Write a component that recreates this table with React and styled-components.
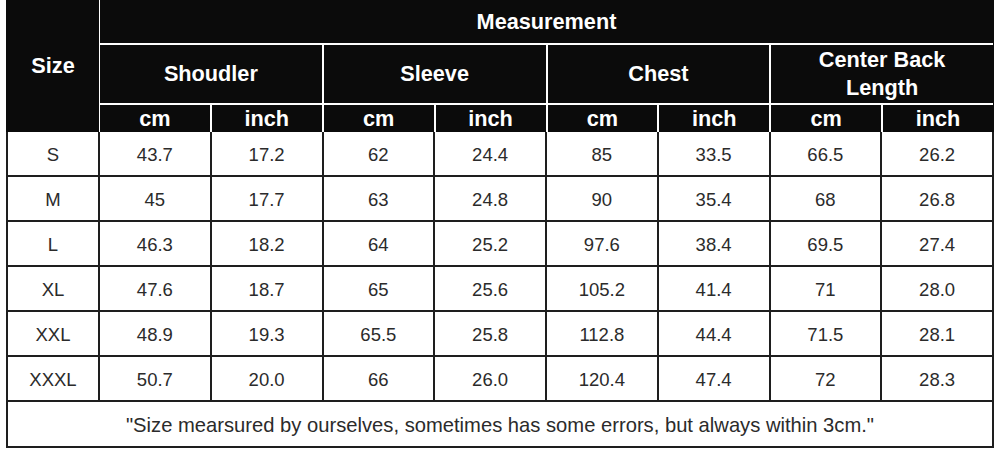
import React from "react";
import styled, { createGlobalStyle } from "styled-components";

const Global = createGlobalStyle`
  html, body { margin: 0; padding: 0; background: #fff; }
  body { font-family: "Liberation Sans", Arial, sans-serif; }
`;

const Page = styled.div`
  width: 988px;
  margin-left: 6px;
`;

const HeaderFrame = styled.div`
  background: #0b0b0b;
  padding: 0 1px;
`;

const HeaderGrid = styled.div`
  display: grid;
  grid-template-columns: 91px repeat(8, 1fr);
  grid-template-rows: 43px 58px 27px;
  gap: 2px;
  background: #fff;
`;

const HeadCell = styled.div`
  background: #0b0b0b;
  color: #fff;
  font-weight: bold;
  font-size: 21.7px;
  line-height: 28px;
  display: flex;
  align-items: center;
  justify-content: center;
  text-align: center;
  grid-column: ${(p) => p.$col || "auto"};
  grid-row: ${(p) => p.$row || "auto"};
`;

const SizeHead = styled(HeadCell)`
  margin: 0 -1px 0 -1px;
  padding-left: 1px;
  align-items: flex-start;
  padding-top: 52px;
`;

const BodyGrid = styled.div`
  display: grid;
  grid-template-columns: 90px repeat(8, 1fr);
  grid-template-rows: repeat(6, 43px) 44px;
  gap: 2px;
  background: #1e1e1e;
  padding: 0 2px 2px 2px;
`;

const Cell = styled.div`
  background: #fff;
  color: #2b2b2b;
  font-size: 18.5px;
  display: flex;
  align-items: center;
  justify-content: center;
  padding-top: 2px;
`;

const Note = styled(Cell)`
  grid-column: 1 / -1;
  font-size: 20.2px;
`;

const groups = ["Shoudler", "Sleeve", "Chest", "Center Back Length"];

const rows = [
  ["S", "43.7", "17.2", "62", "24.4", "85", "33.5", "66.5", "26.2"],
  ["M", "45", "17.7", "63", "24.8", "90", "35.4", "68", "26.8"],
  ["L", "46.3", "18.2", "64", "25.2", "97.6", "38.4", "69.5", "27.4"],
  ["XL", "47.6", "18.7", "65", "25.6", "105.2", "41.4", "71", "28.0"],
  ["XXL", "48.9", "19.3", "65.5", "25.8", "112.8", "44.4", "71.5", "28.1"],
  ["XXXL", "50.7", "20.0", "66", "26.0", "120.4", "47.4", "72", "28.3"],
];

export default function App() {
  return (
    <Page>
      <Global />
      <HeaderFrame>
        <HeaderGrid>
          <SizeHead $col="1" $row="1 / 4">Size</SizeHead>
          <HeadCell $col="2 / 10" $row="1">Measurement</HeadCell>
          {groups.map((g, i) => (
            <HeadCell key={g} $col={`${2 + i * 2} / span 2`} $row="2">
              {g === "Center Back Length" ? (
                <span>
                  Center Back
                  <br />
                  Length
                </span>
              ) : (
                g
              )}
            </HeadCell>
          ))}
          {groups.flatMap((g) => [
            <HeadCell key={g + "cm"} $row="3">cm</HeadCell>,
            <HeadCell key={g + "in"} $row="3">inch</HeadCell>,
          ])}
        </HeaderGrid>
      </HeaderFrame>
      <BodyGrid>
        {rows.map((r) =>
          r.map((v, i) => <Cell key={r[0] + i}>{v}</Cell>)
        )}
        <Note>
          "Size mearsured by ourselves, sometimes has some errors, but always within 3cm."
        </Note>
      </BodyGrid>
    </Page>
  );
}
